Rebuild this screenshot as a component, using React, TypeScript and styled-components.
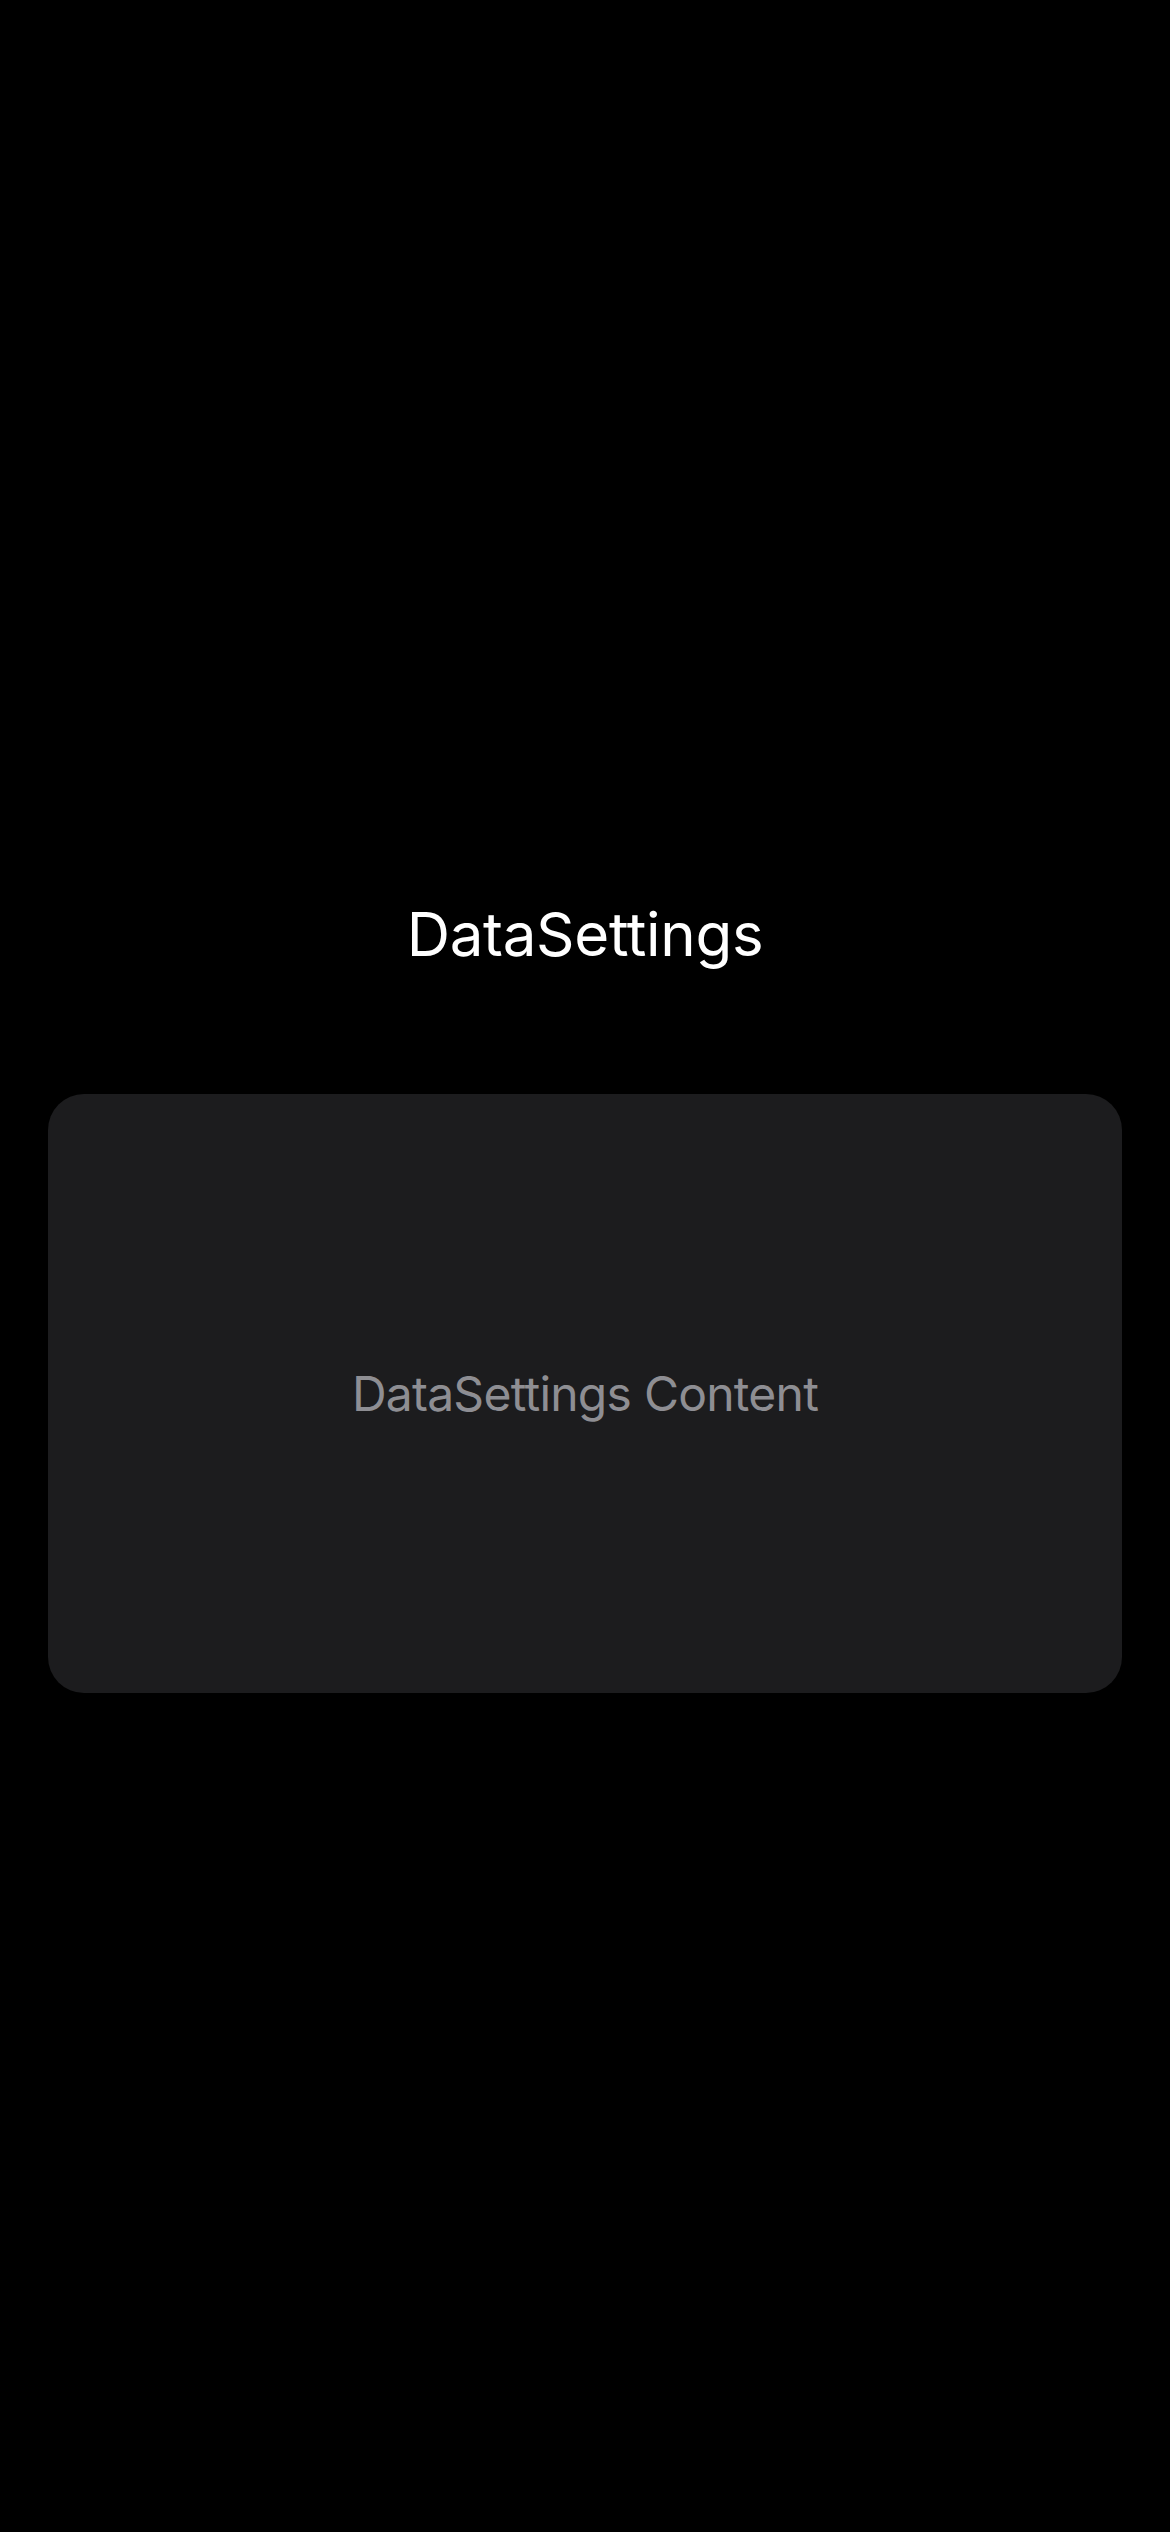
import React from "react";
import styled, { createGlobalStyle } from "styled-components";

const GlobalStyle = createGlobalStyle`
  html, body {
    margin: 0;
    padding: 0;
    background: #000000;
  }
  body {
    font-family: Inter, "Noto Sans", "Liberation Sans", sans-serif;
    -webkit-font-smoothing: antialiased;
  }
`;

const Screen = styled.main`
  box-sizing: border-box;
  width: 1170px;
  min-height: 2532px;
  background: #000000;
  display: flex;
  flex-direction: column;
  align-items: stretch;
  padding: 898px 48px 0 48px;
`;

const Title = styled.h1`
  margin: 0;
  font-size: 60px;
  line-height: 72px;
  font-weight: 400;
  color: #ffffff;
  text-align: center;
  letter-spacing: -0.3px;
`;

const Card = styled.section`
  margin-top: 124px;
  height: 599px;
  border-radius: 36px;
  background: #1c1c1e;
  display: flex;
  align-items: center;
  justify-content: center;
`;

const CardText = styled.p`
  margin: 0;
  font-size: 48px;
  font-weight: 400;
  color: #8e8e93;
  letter-spacing: -0.75px;
`;

export default function App() {
  return (
    <>
      <GlobalStyle />
      <Screen>
        <Title>DataSettings</Title>
        <Card>
          <CardText>DataSettings Content</CardText>
        </Card>
      </Screen>
    </>
  );
}
